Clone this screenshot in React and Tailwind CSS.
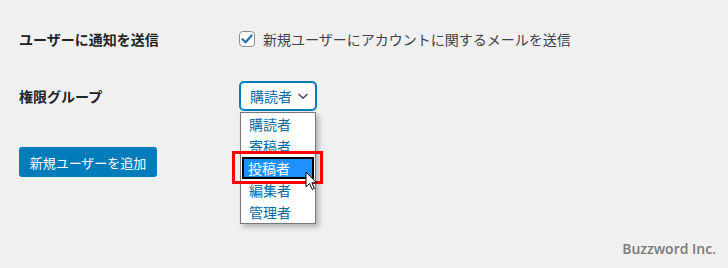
import React from 'react';

const items = ['購読者', '寄稿者', '投稿者', '編集者', '管理者'];

const App = () => {
    return (
        <div className="relative flex h-[268px] w-[728px] flex-col bg-[#f0f0f1] font-['Noto_Sans_CJK_JP','Noto_Sans',sans-serif] text-[14px] text-[#1d2327]">
            <div className="pl-[19px] pt-[31px]">
                {/* Notification row */}
                <div className="flex h-4 items-center">
                    <div className="w-[220px] font-semibold leading-none">ユーザーに通知を送信</div>
                    <div className="flex items-center">
                        <span className="flex h-4 w-4 items-center justify-center rounded-[4px] border border-[#8c8f94] bg-white">
                            <svg width="14" height="14" viewBox="0 0 14 14">
                                <path d="M2.5 7.2 L5.6 10.2 L11.6 3.4" fill="none" stroke="#2271b1" strokeWidth="2.2" strokeLinecap="round" strokeLinejoin="round" />
                            </svg>
                        </span>
                        <span className="ml-2 leading-none text-[#3c434a]">新規ユーザーにアカウントに関するメールを送信</span>
                    </div>
                </div>

                {/* Role row */}
                <div className="mt-[34px] flex h-[30px] items-center">
                    <div className="w-[221px] font-semibold leading-none">権限グループ</div>
                    <div className="relative">
                        <div className="flex h-[28px] w-[76px] items-center rounded-[4px] border border-[#007cba] bg-white pl-[9px] text-[#0a6aa1] shadow-[0_0_0_1px_#007cba]">
                            <span className="leading-none">購読者</span>
                            <svg className="ml-[5px]" width="12" height="12" viewBox="0 0 12 12">
                                <path d="M1.5 4 L6 8.2 L10.5 4" fill="none" stroke="#50575e" strokeWidth="1.6" />
                            </svg>
                        </div>
                        {/* Open options list */}
                        <div className="absolute left-0 top-[30px] z-10 w-[76px] border border-[#767676] bg-white shadow-[3px_3px_5px_rgba(0,0,0,0.25)]">
                            {items.map((item, index) =>
                                index === 2 ? (
                                    <div key={item} className="mx-px flex h-[22px] items-center border-2 border-black bg-[#1e90ff] pl-[4px] leading-none text-white">
                                        {item}
                                    </div>
                                ) : (
                                    <div key={item} className="flex h-[22px] items-center pl-[8px] leading-none text-[#0a6aa1]">
                                        {item}
                                    </div>
                                )
                            )}
                        </div>
                    </div>
                </div>

                {/* Submit button */}
                <button className="mt-[36px] flex h-[30px] w-[138px] items-center justify-center rounded-[3px] bg-[#007cba] text-[13px] leading-none text-white">
                    新規ユーザーを追加
                </button>
            </div>

            {/* Annotation box and cursor */}
            <div className="absolute left-[232px] top-[151px] z-20 h-[33px] w-[91px] border-[3px] border-[#ff0000]" />
            <svg className="absolute left-[305px] top-[171px] z-30" width="13" height="20" viewBox="0 0 13 20">
                <path d="M1 1 L1 16 L4.6 12.6 L7.2 18.4 L9.4 17.4 L6.9 11.8 L11.6 11.8 Z" fill="#fff" stroke="#000" strokeWidth="1" strokeLinejoin="round" />
            </svg>

            {/* Footer */}
            <div className="mt-auto self-end pb-[12px] pr-[12px] font-['Open_Sans','Liberation_Sans',sans-serif] text-[14px] font-semibold leading-none text-[#7a7a7a]">
                Buzzword Inc.
            </div>
        </div>
    );
};

export default App;
